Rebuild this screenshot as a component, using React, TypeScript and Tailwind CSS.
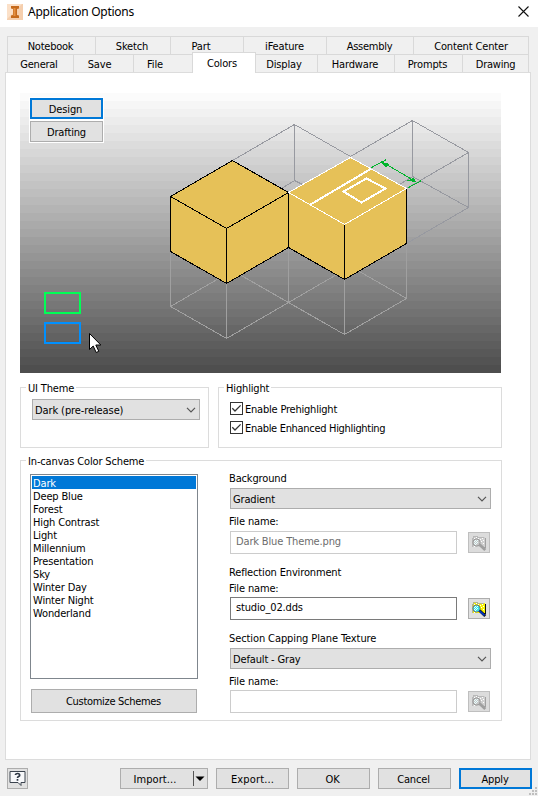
import React from 'react';

const cx = (...c: (string | undefined)[]) => c.filter(Boolean).join(' ');

function Tab({ label, className, text }: { label: string; className: string; text?: string }) {
  return (
    <div className={cx('flex h-[19px] shrink-0 items-center justify-center border border-[#d9d9d9] bg-[#f0f0f0] pt-[2px]', className)}>
      <span className={cx('leading-[13px]', text)}>{label}</span>
    </div>
  );
}

function Button({ label, className, primary, text }: { label: string; className: string; primary?: boolean; text?: string }) {
  return (
    <button
      className={cx(
        'flex shrink-0 items-center justify-center bg-[#e1e1e1] pt-[2px] leading-[13px]',
        primary ? 'border-2 border-[#0078d7]' : 'border border-[#adadad]',
        className,
      )}
    >
      <span className={text}>{label}</span>
    </button>
  );
}

function Group({ title, className, children }: { title: string; className: string; children: React.ReactNode }) {
  return (
    <section className={cx('relative shrink-0 border border-[#dcdcdc]', className)}>
      <span className="absolute -top-[6px] left-[5px] bg-white px-[2px] leading-[13px]">{title}</span>
      {children}
    </section>
  );
}

function Select({ value, className }: { value: string; className: string }) {
  return (
    <div className={cx('flex h-[21px] items-center justify-between border border-[#adadad] bg-[#e1e1e1] pr-[3px] pl-[2px] leading-[13px]', className)}>
      <span className="pt-[2px]">{value}</span>
      <svg width="10" height="6" viewBox="0 0 10 6" fill="none" stroke="#555" strokeWidth="1.2">
        <path d="M1 .8 5 4.8 9 .8" />
      </svg>
    </div>
  );
}

function Check({ label, text }: { label: string; text?: string }) {
  return (
    <label className="flex h-[13px] items-center gap-[2px] leading-[13px]">
      <span className="flex size-[13px] items-center justify-center border border-[#333] bg-white">
        <svg width="11" height="11" viewBox="0 0 11 11" fill="none" stroke="#333" strokeWidth="1.3">
          <path d="M1.3 5.3 4 8 9.6 2.4" />
        </svg>
      </span>
      <span className={cx('pt-[2px]', text)}>{label}</span>
    </label>
  );
}

function BrowseButton({ disabled }: { disabled?: boolean }) {
  const folder = disabled ? '#cfcfcf' : '#f8f400';
  const lens = disabled ? '#c8c8c8' : '#30e8f0';
  const handle = disabled ? '#a0a0a0' : '#0038c8';
  const dark = disabled ? '#a0a0a0' : '#111';
  return (
    <button className={cx('flex h-[21px] w-[22px] items-center justify-center border', disabled ? 'border-[#bfbfbf] bg-[#dcdcdc]' : 'border-[#adadad] bg-[#e1e1e1]')}>
      <svg width="16" height="16" viewBox="0 0 16 16" shapeRendering="crispEdges">
        <path d="M1 3h1V1h5v1h7v10H1z" fill={folder} />
        <path d="M1 12V3h1V1h4v1h7" fill="none" stroke={disabled ? '#b8b8b8' : '#b5b58a'} />
        <path d="M3 3h1v1H3zM5 2h1v1H5zM7 3h1v1H7zM9 4h1v1H9zM11 3h1v1h-1zM10 6h1v1h-1zM12 5h1v1h-1zM12 8h1v1h-1zM3 11h1v1H3z" fill="#fff" />
        <path d="M14.500 3v10M12 12.500h3" stroke={dark} />
        <circle cx="5.500" cy="7.500" r="3.600" fill={lens} stroke={disabled ? '#999' : '#777'} shapeRendering="auto" />
        <path d="M4 5h1v1H4zM6 5h1v1H6zM3 6h1v1H3zM5 6h1v1H5zM4 7h1v1H4zM6 7h1v1H6zM3 8h1v1H3zM5 8h1v1H5zM4 9h1v1H4z" fill="#e8ffff" />
        <g shapeRendering="auto">
          <path d="m8.500 9.500 5.800 5.500" stroke={dark} strokeWidth="2.800" />
          <path d="m8.500 9.800 5 4.600" stroke={handle} strokeWidth="1.800" />
        </g>
      </svg>
    </button>
  );
}

function FileRow({ value, disabled }: { value?: string; disabled?: boolean }) {
  return (
    <div className="flex h-[23px] items-center gap-[11px]">
      <div className={cx('h-[23px] w-[227px] border bg-white pt-[3px] pl-[5px] leading-[13px]', disabled ? 'border-[#cccccc] text-[#6d6d6d]' : 'border-[#7a7a7a]')}>
        {value}
      </div>
      <BrowseButton disabled={disabled} />
    </div>
  );
}

const bands = Array.from({ length: 35 }, (_, i) => {
  const v = Math.round(251 - (i * 173) / 34);
  return `rgb(${v},${v},${v})`;
});

function Preview() {
  return (
    <svg className="block" width="481" height="280" viewBox="20 93 481 280" shapeRendering="crispEdges">
      {bands.map((c, i) => (
        <rect key={i} x="20" y={93 + i * 8} width="481" height="8" fill={c} />
      ))}
      <g transform="translate(.5 .5)" fill="none">
        <g stroke="#9799a0">
          <path d="M232 160 294 124 350 156 412 120 468 152V207L406 243" />
          <path d="M294 124V180M281 188 294 180 302 184M412 120V176M399 184 412 176 468 207M468 152 406 188" />
        </g>
        <g stroke="#a0a0a0">
          <path d="M170 251V306L226 338 350 266M170 306 232 270 344 334 406 298 350 266M406 243V298M226 283V338M288 247V302M344 279V334" />
        </g>
        <path d="M170 196 232 160 288 192V247L226 283 170 251z" fill="#e6c158" stroke="#000" />
        <path d="M170 196 226 228 288 192M226 228V283" stroke="#000" />
        <path d="M288 192 350 157 406 188V243L344 279 288 247z" fill="#e6c158" stroke="#000" />
        <path d="M344 224V279" stroke="#000" />
        <path d="M288 192 350 157 406 188 344 224z" stroke="#fff" />
        <path d="M310 204 371 168M343 191 366 178 385 188 361 202z" stroke="#fff" strokeWidth="2" />
        <g stroke="#00b52c">
          <path d="M371 167 386 159M408 187 421 180M381 161 415 181" />
          <path d="M382 163 387 163 388 165 385 166zM408 180 413 178 415 181z" fill="#00b52c" />
        </g>
        <path d="M44.5 292.5h35v20h-35z" stroke="#00ff55" strokeWidth="2" />
        <path d="M44.5 322.5h35v20h-35z" stroke="#0090ff" strokeWidth="2" />
      </g>
      <path d="M89.500 333.500v16l3.700-3.500 3 6.500 2.600-1.200-3-6.300h5z" fill="#fff" stroke="#000" shapeRendering="auto" />
    </svg>
  );
}

const schemes = ['Dark', 'Deep Blue', 'Forest', 'High Contrast', 'Light', 'Millennium', 'Presentation', 'Sky', 'Winter Day', 'Winter Night', 'Wonderland'];

export default function App() {
  return (
    <div className="flex h-[796px] w-[538px] flex-col overflow-hidden bg-[#f0f0f0] font-['DejaVu_Sans_Condensed','DejaVu_Sans',sans-serif] text-[11px] tracking-[-0.15px] text-black [font-stretch:semi-condensed]">
      <header className="flex h-[27px] shrink-0 items-center bg-white pr-[9px] pb-[4px] pl-[7px]">
        <svg width="16" height="16" viewBox="0 0 16 16">
          <path d="M0 0h16v16H0z" fill="#fbe0c8" />
          <path d="M0 15 15 0h1v16H0z" fill="#f5cfae" />
          <path d="M4 2h8v2.500l-2 .6v5.800l2 .6V14H4v-2.500l2-.6V5.100l-2-.6z" fill="#c56a1c" />
          <path d="M6.500 4h2v8h-2z" fill="#e59143" />
        </svg>
        <span className="ml-[5px] flex-1 pt-px font-['Noto_Sans',sans-serif] text-[12px] tracking-[-0.26px]">Application Options</span>
        <svg width="11" height="11" viewBox="0 0 11 11" stroke="#111" strokeWidth="1.1">
          <path d="m.5.5 10 10M10.500.5l-10 10" />
        </svg>
      </header>

      <nav className="shrink-0 pt-[9px] pl-[7px]">
        <div className="flex">
          <Tab label="Notebook" className="w-[89px] pr-[2px]" text="tracking-[-0.25px]" />
          <Tab label="Sketch" className="-ml-px w-[76px] pr-[2px]" />
          <Tab label="Part" className="-ml-px w-[74px] pr-[12px]" />
          <Tab label="iFeature" className="-ml-px w-[84px] pr-px" />
          <Tab label="Assembly" className="-ml-px w-[88px] pr-px" text="tracking-[-0.25px]" />
          <Tab label="Content Center" className="-ml-px w-[116px]" />
        </div>
        <div className="-mt-px flex items-end">
          <Tab label="General" className="w-[67px] pr-[3px]" text="tracking-[-0.25px]" />
          <Tab label="Save" className="-ml-px w-[61px] pr-[8px]" />
          <Tab label="File" className="-ml-px w-[60px] pr-[16px]" />
          <Tab label="Colors" className="relative z-10 -mt-[2px] -ml-px h-[21px] w-[64px] border-b-0 !bg-white pr-[4px] !pt-0" />
          <Tab label="Display" className="-ml-px w-[63px] pr-[5px]" />
          <Tab label="Hardware" className="-ml-px w-[78px] pr-[2px]" />
          <Tab label="Prompts" className="-ml-px w-[69px] pr-[2px]" />
          <Tab label="Drawing" className="-ml-px w-[67px]" text="tracking-[-0.25px]" />
        </div>
      </nav>

      <main className="-mt-px ml-[5px] h-[688px] w-[526px] shrink-0 border border-[#dcdcdc] bg-white pt-[20px] pl-[14px]">
        <div className="relative h-[280px] w-[481px]">
          <Preview />
          <div className="absolute top-[4px] left-[9px] flex flex-col gap-[2px] bg-white p-px">
            <Button label="Design" primary className="h-[21px] w-[73px] pr-[2px]" />
            <Button label="Drafting" className="h-[21px] w-[73px]" />
          </div>
        </div>

        <div className="mt-[14px] flex gap-[9px]">
          <Group title="UI Theme" className="h-[61px] w-[189px] pt-[11px] pl-[11px]">
            <Select value="Dark (pre-release)" className="w-[168px] tracking-[-0.1px]" />
          </Group>
          <Group title="Highlight" className="h-[61px] w-[284px] pt-[14px] pl-[11px]">
            <div className="flex flex-col gap-[6px]">
              <Check label="Enable Prehighlight" text="tracking-[-0.21px]" />
              <Check label="Enable Enhanced Highlighting" text="tracking-[-0.31px]" />
            </div>
          </Group>
        </div>

        <Group title="In-canvas Color Scheme" className="mt-[12px] flex h-[261px] w-[482px] pl-[9px]">
          <div className="w-[168px] pt-[13px]">
            <ul className="h-[205px] border border-[#7f868d] p-px">
              {schemes.map((s, i) => (
                <li key={s} className={cx('h-[13px] pt-px pl-px leading-[13px]', i === 0 ? 'bg-[#0078d7] text-white' : undefined)}>{s}</li>
              ))}
            </ul>
            <Button label="Customize Schemes" className="mt-[10px] ml-px h-[24px] w-[166px] pr-px !pt-0" text="tracking-[-0.3px]" />
          </div>
          <div className="ml-[32px] flex w-[261px] flex-col leading-[13px]">
            <span className="mt-[11px] -ml-px">Background</span>
            <Select value="Gradient" className="mt-[3px]" />
            <span className="mt-[6px] mb-[3px] -ml-px">File name:</span>
            <FileRow value="Dark Blue Theme.png" disabled />
            <span className="mt-[12px] -ml-px">Reflection Environment</span>
            <span className="mt-[3px] mb-[2px] -ml-px">File name:</span>
            <FileRow value="studio_02.dds" />
            <span className="mt-[12px] -ml-px tracking-[-0.1px]">Section Capping Plane Texture</span>
            <Select value="Default - Gray" className="mt-[3px]" />
            <span className="mt-[6px] mb-[2px] -ml-px">File name:</span>
            <FileRow disabled />
          </div>
        </Group>
      </main>

      <footer className="relative mt-[8px] flex h-[28px] items-start pl-[7px]">
        <button className="flex size-[21px] items-center justify-center border border-[#adadad] bg-[#e1e1e1]">
          <svg width="17" height="17" viewBox="0 0 17 17">
            <path d="M1 1.500h15v11h-4v3l-3-3H1z" fill="#f7f8fa" stroke="#3c444f" />
            <path d="M6.500 5c0-2 4.200-2 4.200.2 0 1.500-2.200 1.300-2.200 2.800M8.500 9v1.700" fill="none" stroke="#2e3744" strokeWidth="1.700" />
          </svg>
        </button>
        <button className="ml-[92px] flex h-[21px] w-[88px] items-center border border-[#adadad] bg-[#e1e1e1] leading-[13px]">
          <span className="flex-1 pt-[2px] pr-[4px] tracking-[0.1px]">Import...</span>
          <span className="h-[15px] w-px bg-[#555]" />
          <svg className="mr-[2px] ml-px" width="10" height="6" viewBox="0 0 10 6">
            <path d="M.5.5h9L5 5z" />
          </svg>
        </button>
        <Button label="Export..." className="ml-[8px] h-[21px] w-[73px]" text="tracking-[0.15px]" />
        <Button label="OK" className="ml-[8px] h-[21px] w-[73px] pr-[2px]" />
        <Button label="Cancel" className="ml-[8px] h-[21px] w-[73px] pr-[2px]" />
        <Button label="Apply" primary className="ml-[8px] h-[21px] w-[73px] pr-px" />
        <svg className="absolute right-0 bottom-0" width="10" height="10" viewBox="0 0 10 10" fill="#bfbfbf">
          <path d="M7 1h2v2H7zM4 4h2v2H4zM7 4h2v2H7zM1 7h2v2H1zM4 7h2v2H4zM7 7h2v2H7z" />
        </svg>
      </footer>
    </div>
  );
}
